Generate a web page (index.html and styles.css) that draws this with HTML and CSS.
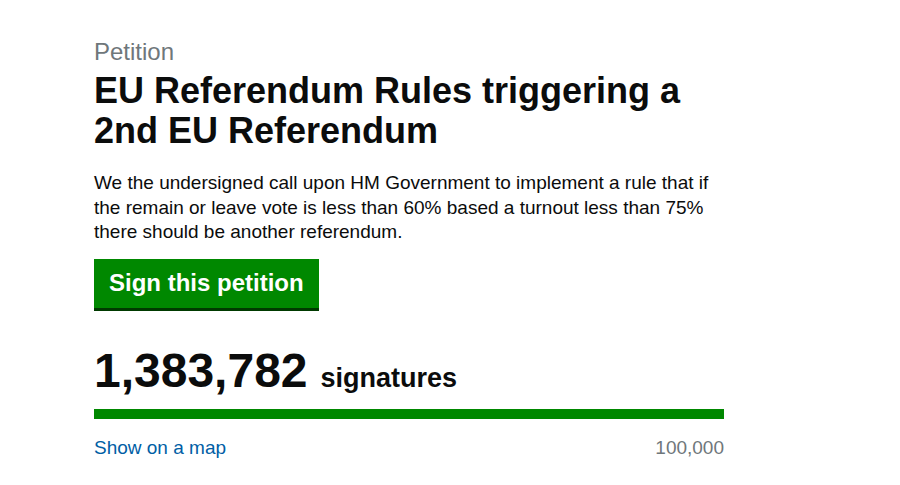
FILE: index.html
```html
<!DOCTYPE html>
<html>
<head>
<meta charset="utf-8">
<link rel="stylesheet" href="styles.css">
</head>
<body>
<main class="page">
  <div class="caption">Petition</div>
  <h1 class="title">EU Referendum Rules triggering a 2nd EU Referendum</h1>
  <p class="action">We the undersigned call upon HM Government to implement a rule that if the remain or leave vote is less than 60% based a turnout less than 75% there should be another referendum.</p>
  <a class="button" href="#">Sign this petition</a>
  <div class="count">
    <span class="count-number">1,383,782</span>
    <span class="count-label">signatures</span>
  </div>
  <div class="progress"><div class="progress-fill" style="width:100%"></div></div>
  <div class="meta">
    <a class="map-link" href="#">Show on a map</a>
    <span class="target">100,000</span>
  </div>
</main>
</body>
</html>
```
FILE: styles.css
```css
html, body {
  margin: 0;
  padding: 0;
  background: #fff;
}
body {
  font-family: "Liberation Sans", Arial, sans-serif;
  color: #0b0c0c;
}
.page {
  width: 630px;
  padding: 37px 0 0 94px;
}
.caption {
  font-size: 24px;
  line-height: 30px;
  color: #6f777b;
}
.title {
  margin: 4px 0 0;
  font-size: 36px;
  line-height: 40px;
  font-weight: bold;
  width: 600px;
}
.action {
  margin: 20px 0 0;
  font-size: 19px;
  line-height: 24.5px;
  width: 630px;
}
.button {
  display: inline-block;
  margin-top: 14px;
  background: #008800;
  color: #fff;
  font-weight: bold;
  font-size: 24px;
  line-height: 28px;
  padding: 10px 15px 11px;
  border-bottom: 3px solid #003a00;
  text-decoration: none;
}
.count {
  margin-top: 35px;
  display: flex;
  align-items: baseline;
  gap: 13px;
  line-height: 50px;
}
.count-number {
  font-size: 48px;
  font-weight: bold;
}
.count-label {
  font-size: 27px;
  font-weight: bold;
}
.progress {
  margin-top: 6px;
  height: 10px;
  background: #dee0e2;
}
.progress-fill {
  height: 100%;
  background: #008800;
}
.meta {
  margin-top: 16px;
  display: flex;
  justify-content: space-between;
  font-size: 19px;
  line-height: 25px;
}
.map-link {
  color: #005ea5;
  text-decoration: none;
}
.target {
  color: #6f777b;
}
```
